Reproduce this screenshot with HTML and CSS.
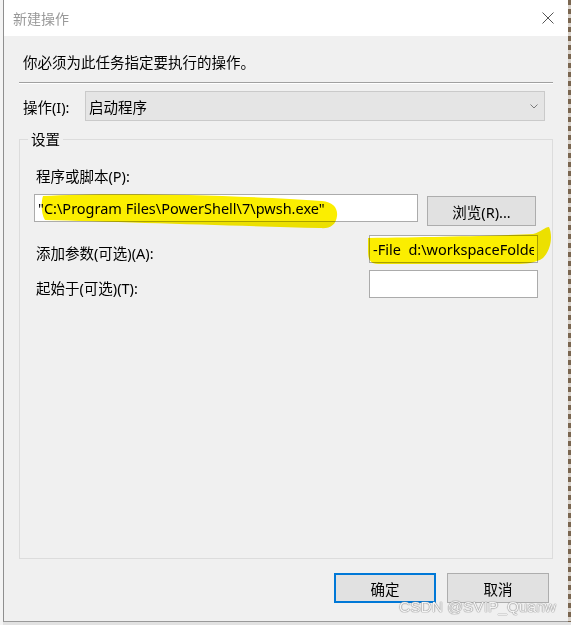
FILE: index.html
```html
<!DOCTYPE html>
<html lang="zh-CN">
<head>
<meta charset="UTF-8">
<meta name="viewport" content="width=device-width, initial-scale=1.0">
<title>新建操作</title>
<link rel="stylesheet" href="styles.css">
</head>
<body>

<div class="desk">
    <div class="dialog">
        <div class="titlebar">
            <span class="title">新建操作</span>
            <svg class="close" width="12" height="12" viewBox="0 0 12 12">
                <path d="M0.5 0.5 L11.5 11.5 M11.5 0.5 L0.5 11.5" stroke="#555" stroke-width="1" fill="none"/>
            </svg>
        </div>

        <div class="content">
            <div class="intro">你必须为此任务指定要执行的操作。</div>
            <div class="rule"></div>

            <div class="op-row">
                <label class="op-label">操作(I):</label>
                <div class="combo">
                    <span>启动程序</span>
                    <svg width="8" height="5" viewBox="0 0 8 5">
                        <polyline points="0.5,0.5 4,4 7.5,0.5" stroke="#7a7a7a" stroke-width="1" fill="none"/>
                    </svg>
                </div>
            </div>

            <fieldset class="settings">
                <legend>设置</legend>
                <div class="group-body">
                    <label class="field-label" for="program">程序或脚本(P):</label>
                    <div class="path-row">
                        <input type="text" id="program" class="path" value="&quot;C:\Program Files\PowerShell\7\pwsh.exe&quot;">
                        <button class="btn browse">浏览(R)...</button>
                    </div>
                    <div class="param-row">
                        <label for="args">添加参数(可选)(A):</label>
                        <input type="text" id="args" class="small" value="-File  d:\workspaceFolder\run.ps1">
                    </div>
                    <div class="param-row">
                        <label for="start">起始于(可选)(T):</label>
                        <input type="text" id="start" class="small">
                    </div>
                </div>
            </fieldset>

            <div class="footer">
                <button class="btn default">确定</button>
                <button class="btn">取消</button>
            </div>
        </div>
    </div>

    <!-- marker strokes drawn over the screenshot -->
    <svg class="marks" width="571" height="625" viewBox="0 0 571 625">
        <path d="M43,196 C110,192 240,195 322,201 C333,202 338,208 337,216 C336,225 330,229 320,228 C240,226 120,222 45,220 C41,214 41,202 43,196 Z"/>
        <path d="M368,238 C430,237 495,236 533,234 C541,232 545,227 549,227 C553,236 551,250 543,258 C536,263 526,264 515,264 L378,264 C370,264 368,259 368,251 Z"/>
    </svg>

    <div class="watermark">CSDN @SVIP_Quanw</div>
</div>

</body>
</html>
```

FILE: styles.css
```css
body {
    margin: 0;
    font-family: "Noto Sans", "Noto Sans CJK SC", sans-serif;
    font-size: 14.5px;
    color: #000;
}

.desk {
    position: relative;
    width: 571px;
    height: 625px;
    overflow: hidden;
    background:
        linear-gradient(to right, #f4f4f4 0 3px, transparent 3px),
        repeating-linear-gradient(to bottom, #7a6650 0 5px, #d9d2ca 5px 9px) right top / 3px 622px no-repeat;
    background-color: #e2e2e2;
}

.dialog {
    margin-left: 3px;
    width: 564px;
    height: 621px;
    border-left: 1px solid #8f8f8f;
    border-bottom: 1px solid #9a9a9a;
    display: flex;
    flex-direction: column;
}

.titlebar {
    height: 36px;
    background-color: #fff;
    display: flex;
    align-items: center;
    justify-content: space-between;
    padding: 0 14px 0 9px;
}

.title {
    color: #999;
    font-size: 14px;
}

.content {
    flex: 1;
    background-color: #f0f0f0;
    display: flex;
    flex-direction: column;
    padding: 0 15px 18px 15px;
}

.intro {
    margin-top: 16px;
    padding-left: 4px;
    line-height: 20px;
}

.rule {
    margin-top: 10px;
    border-top: 1px solid #a0a0a0;
    border-bottom: 1px solid #fff;
}

.op-row {
    margin-top: 7px;
    display: flex;
    align-items: center;
}

.op-label {
    width: 66px;
    padding-left: 4px;
    box-sizing: border-box;
    padding-top: 1px;
}

.combo {
    flex: 1;
    margin-right: 8px;
    height: 30px;
    box-sizing: border-box;
    background-color: #e5e5e5;
    border: 1px solid #cacaca;
    display: flex;
    align-items: center;
    justify-content: space-between;
    padding: 0 6px 0 3px;
}

.settings {
    flex: 1;
    margin: 8px 0 0;
    padding: 0;
    min-width: 0;
    border: 1px solid #dcdcdc;
}

.settings legend {
    margin-left: 8px;
    padding: 0 3px;
    line-height: 20px;
}

.group-body {
    padding: 0 14px 0 14px;
}

.field-label {
    display: block;
    margin-top: 17px;
    padding-left: 2px;
    line-height: 20px;
}

.path-row {
    margin-top: 8px;
    display: flex;
    align-items: flex-start;
    gap: 9px;
}

input[type="text"] {
    font: inherit;
    height: 28px;
    box-sizing: border-box;
    border: 1px solid #ababab;
    background-color: #fff;
    padding: 0 3px;
    margin: 0;
    outline: none;
}

.path {
    width: 384px;
}

.param-row {
    margin-top: 9px;
    display: flex;
    justify-content: space-between;
}

.param-row + .param-row {
    margin-top: 7px;
}

.param-row label {
    padding-top: 8px;
    padding-left: 2px;
    line-height: 20px;
}

.small {
    width: 169px;
    padding-left: 2px;
}

.btn {
    font: inherit;
    color: #000;
    background-color: #e1e1e1;
    border: 1px solid #adadad;
    padding: 0;
    height: 30px;
    box-sizing: border-box;
}

.browse {
    width: 109px;
    margin-top: 2px;
}

.footer {
    margin-top: 14px;
    display: flex;
    justify-content: flex-end;
    gap: 11px;
    padding-right: 4px;
}

.footer .btn {
    width: 102px;
}

.btn.default {
    border: 2px solid #0078d7;
}

.marks {
    position: absolute;
    top: 0;
    left: 0;
    pointer-events: none;
}

.marks path {
    fill: #fbee00;
    mix-blend-mode: multiply;
}

.watermark {
    position: absolute;
    left: 399px;
    top: 597px;
    font-family: "Liberation Sans", Arial, sans-serif;
    font-size: 15.5px;
    line-height: 20px;
    color: #f4f4f4;
    text-shadow: 0 0 1px #8a8a8a, 0 0 1px #8a8a8a, 0 0 1px #9a9a9a;
}
```
